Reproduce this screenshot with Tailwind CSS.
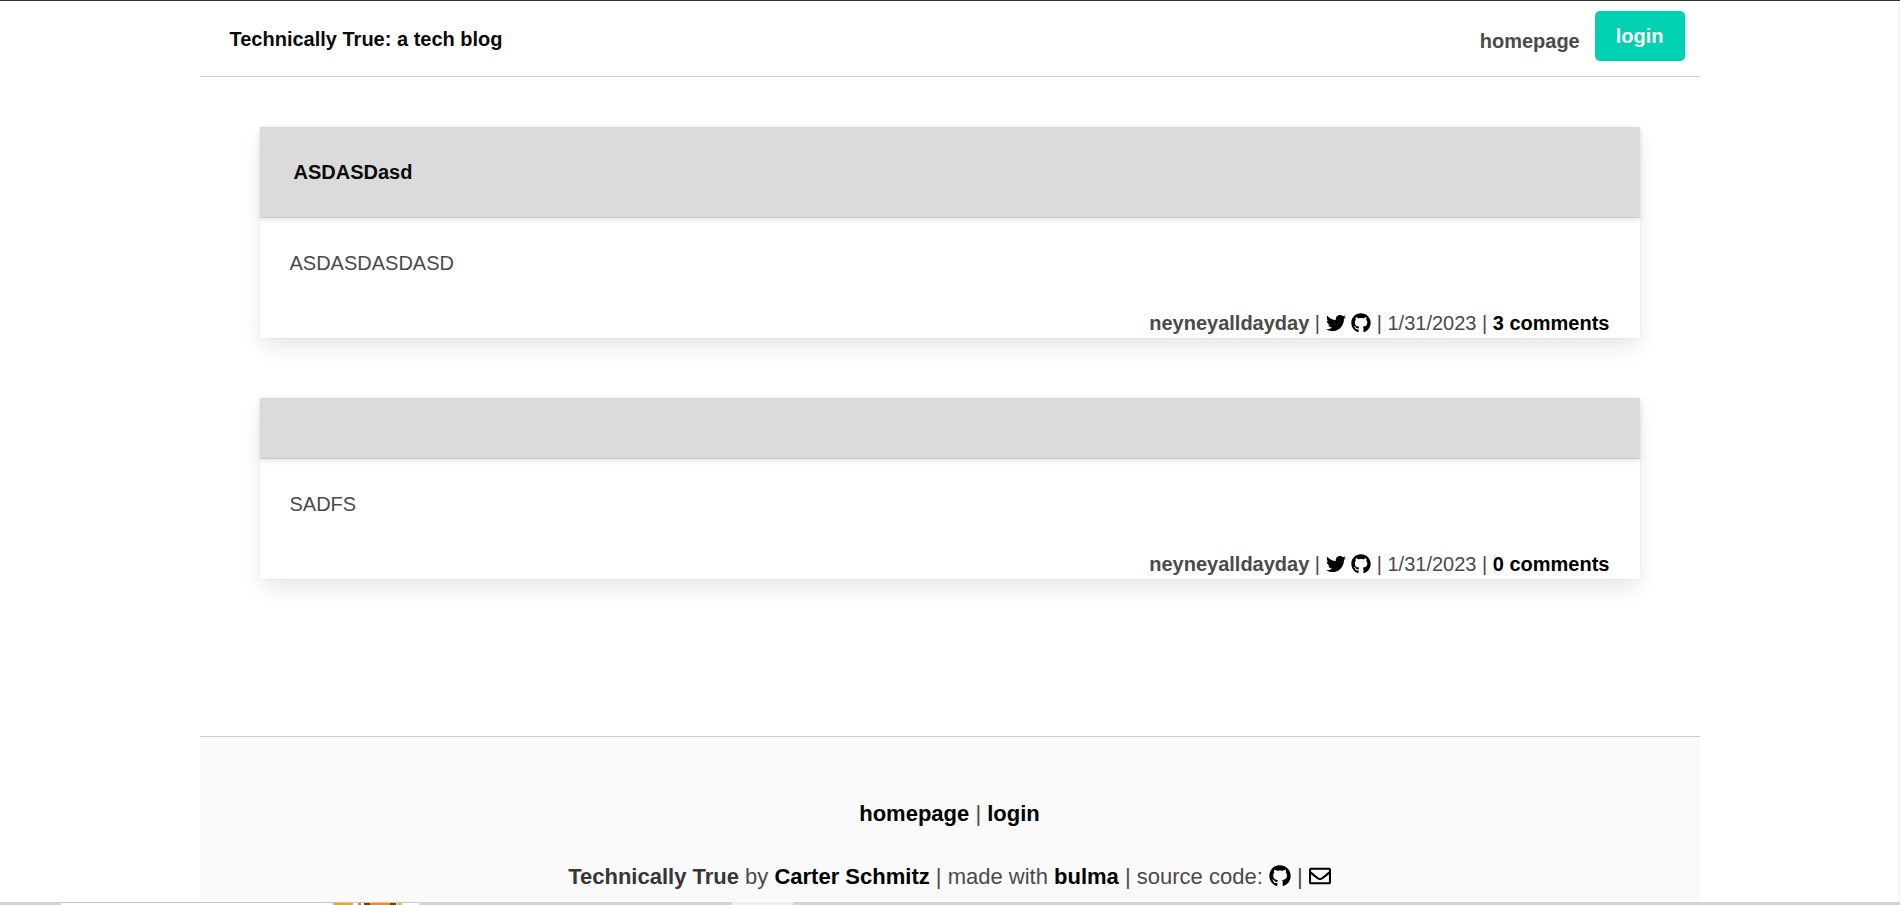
<!DOCTYPE html>
<html lang="en">
<head>
<meta charset="utf-8">
<title>Technically True: a tech blog</title>
<script src="https://cdn.jsdelivr.net/npm/@tailwindcss/browser@4"></script>
</head>
<body class="flex h-screen flex-col overflow-hidden border-t border-[#333] bg-white font-['Liberation_Sans',Arial,sans-serif] text-[20px] leading-[30px] text-[#4a4a4a]">
<svg class="hidden" aria-hidden="true">
  <symbol id="twitter" viewBox="0 0 512 512"><path d="M459.37 151.716c.325 4.548.325 9.097.325 13.645 0 138.72-105.583 298.558-298.558 298.558-59.452 0-114.68-17.219-161.137-47.106 8.447.974 16.568 1.299 25.34 1.299 49.055 0 94.213-16.568 130.274-44.832-46.132-.975-84.792-31.188-98.112-72.772 6.498.974 12.995 1.624 19.818 1.624 9.421 0 18.843-1.3 27.614-3.573-48.081-9.747-84.143-51.98-84.143-102.985v-1.299c13.969 7.797 30.214 12.67 47.431 13.319-28.264-18.843-46.781-51.005-46.781-87.391 0-19.492 5.197-37.36 14.294-52.954 51.655 63.675 129.3 105.258 216.365 109.807-1.624-7.797-2.599-15.918-2.599-24.04 0-57.828 46.782-104.934 104.934-104.934 30.213 0 57.502 12.67 76.67 33.137 23.715-4.548 46.456-13.32 66.599-25.34-7.798 24.366-24.366 44.833-46.132 57.827 21.117-2.273 41.584-8.122 60.426-16.243-14.292 20.791-32.161 39.308-52.628 54.253z"/></symbol>
  <symbol id="github" viewBox="0 0 496 512"><path d="M165.9 397.4c0 2-2.3 3.6-5.2 3.6-3.3.3-5.6-1.3-5.6-3.6 0-2 2.3-3.6 5.2-3.6 3-.3 5.6 1.3 5.6 3.6zm-31.1-4.5c-.7 2 1.3 4.3 4.3 4.9 2.6 1 5.6 0 6.2-2s-1.3-4.3-4.3-5.2c-2.6-.7-5.5.3-6.2 2.3zm44.2-1.7c-2.9.7-4.9 2.6-4.6 4.9.3 2 2.9 3.3 5.9 2.6 2.9-.7 4.9-2.6 4.6-4.6-.3-1.9-3-3.2-5.9-2.9zM244.8 8C106.1 8 0 113.3 0 252c0 110.9 69.8 205.8 169.5 239.2 12.8 2.3 17.3-5.6 17.3-12.1 0-6.2-.3-40.4-.3-61.4 0 0-70 15-84.7-29.8 0 0-11.4-29.1-27.8-36.6 0 0-22.9-15.7 1.6-15.4 0 0 24.9 2 38.6 25.8 21.9 38.6 58.6 27.5 72.9 20.9 2.3-16 8.8-27.1 16-33.7-55.9-6.2-112.3-14.3-112.3-110.5 0-27.5 7.6-41.3 23.6-58.9-2.6-6.5-11.1-33.3 2.6-67.9 20.9-6.5 69 27 69 27 20-5.6 41.5-8.5 62.8-8.5s42.8 2.9 62.8 8.5c0 0 48.1-33.6 69-27 13.7 34.7 5.2 61.4 2.6 67.9 16 17.7 25.8 31.5 25.8 58.9 0 96.5-58.9 104.2-114.8 110.5 9.2 7.9 17 22.9 17 46.4 0 33.7-.3 75.4-.3 83.6 0 6.5 4.6 14.4 17.3 12.1C428.2 457.8 496 362.9 496 252 496 113.3 383.5 8 244.8 8z"/></symbol>
  <symbol id="envelope" viewBox="0 0 512 512"><path d="M464 64H48C21.49 64 0 85.49 0 112v288c0 26.51 21.49 48 48 48h416c26.51 0 48-21.49 48-48V112c0-26.51-21.49-48-48-48zm0 48v40.805c-22.422 18.259-58.168 46.651-134.587 106.49-16.841 13.247-50.201 45.072-73.413 44.701-23.208.375-56.579-31.459-73.413-44.701C106.18 199.465 70.425 171.067 48 152.805V112h416zM48 400V214.398c22.914 18.251 55.409 43.862 104.938 82.646 21.857 17.205 60.134 55.186 103.062 54.955 42.717.231 80.509-37.199 103.053-54.947 49.528-38.783 82.032-64.401 104.947-82.653V400H48z"/></symbol>
</svg>

<div class="min-h-0 flex-1 overflow-hidden border-r border-[#f0f0f0]">
  <div class="mx-auto max-w-[1500px]">
    <header class="flex items-start justify-between border-b border-[#cbcbcb] pt-[10px] pr-[15px] pb-[15px] pl-[30px]">
      <h1 class="pt-[13px] pb-[7px] font-bold text-[#0a0a0a]"><a href="#">Technically True: a tech blog</a></h1>
      <nav class="flex items-start gap-[15px]">
        <a href="#" class="pt-[15px] font-bold">homepage</a>
        <button type="button" class="h-[50px] rounded-[5px] bg-[#00d1b2] px-[21px] font-bold text-white">login</button>
      </nav>
    </header>

    <main class="flex flex-col gap-[60px] px-[60px] pt-[50px] pb-[157px]">
      <article class="bg-white shadow-[0_10px_20px_-2px_rgba(10,10,10,0.1),0_0_0_1px_rgba(10,10,10,0.02)]">
        <header class="border-b border-[#cbcbcb] bg-[#dbdbdb] py-[30px] pr-[30px] pl-[34px] shadow-[0_2px_5px_rgba(10,10,10,0.1)]">
          <h2 class="font-bold text-[#0a0a0a]"><a href="#">ASDASDasd</a></h2>
        </header>
        <p class="p-[30px]">ASDASDASDASD</p>
        <p class="px-[30px] text-right"><strong>neyneyalldayday</strong> | <a href="#" aria-label="Twitter"><svg class="inline-block size-[20px] align-[-3px] fill-black"><use href="#twitter"/></svg></a> <a href="#" aria-label="GitHub"><svg class="inline-block h-[20px] w-[20px] align-[-3px] fill-black"><use href="#github"/></svg></a> | 1/31/2023 | <a href="#" class="font-bold text-black">3 comments</a></p>
      </article>

      <article class="bg-white shadow-[0_10px_20px_-2px_rgba(10,10,10,0.1),0_0_0_1px_rgba(10,10,10,0.02)]">
        <header class="border-b border-[#cbcbcb] bg-[#dbdbdb] py-[30px] shadow-[0_2px_5px_rgba(10,10,10,0.1)]"></header>
        <p class="p-[30px]">SADFS</p>
        <p class="px-[30px] text-right"><strong>neyneyalldayday</strong> | <a href="#" aria-label="Twitter"><svg class="inline-block size-[20px] align-[-3px] fill-black"><use href="#twitter"/></svg></a> <a href="#" aria-label="GitHub"><svg class="inline-block h-[20px] w-[20px] align-[-3px] fill-black"><use href="#github"/></svg></a> | 1/31/2023 | <a href="#" class="font-bold text-black">0 comments</a></p>
      </article>
    </main>

    <footer class="flex flex-col gap-[30px] border-t border-[#cbcbcb] bg-[#fafafa] px-[30px] pt-[60px] pb-[60px] text-center text-[22px] leading-[33px]">
      <p><a href="#" class="font-bold text-black">homepage</a> | <a href="#" class="font-bold text-black">login</a></p>
      <p><strong class="text-[#363636]">Technically True</strong> by <a href="#" class="font-bold text-black">Carter Schmitz</a> | made with <a href="#" class="font-bold text-black">bulma</a> | source code: <a href="#" aria-label="GitHub"><svg class="inline-block size-[22px] align-[-3px] fill-black"><use href="#github"/></svg></a> | <a href="#" aria-label="Email"><svg class="inline-block size-[22px] align-[-3px] fill-black"><use href="#envelope"/></svg></a></p>
    </footer>
  </div>
</div>

<!-- Sliver of the desktop taskbar under the page -->
<div class="flex h-[3px] shrink-0 bg-[#d4d4d4]" aria-hidden="true">
  <div class="ml-[61px] flex w-[358px] border-t border-[#c6c6c6] bg-white pl-[272px]">
    <div class="w-[20px] border-x-2 border-[#f7a072] bg-[#e0a830]"></div>
    <div class="ml-[5px] w-[3px] bg-[#e0706a]"></div>
    <div class="ml-[3px] w-[6px] bg-[#6b430a]"></div>
    <div class="w-[20px] bg-[#ee8a3c]"></div>
    <div class="w-[6px] bg-[#6b430a]"></div>
    <div class="ml-[1px] w-[5px] bg-[#f3b070]"></div>
  </div>
  <div class="ml-[313px] w-[61px] bg-[#efefef]"></div>
</div>
</body>
</html>
